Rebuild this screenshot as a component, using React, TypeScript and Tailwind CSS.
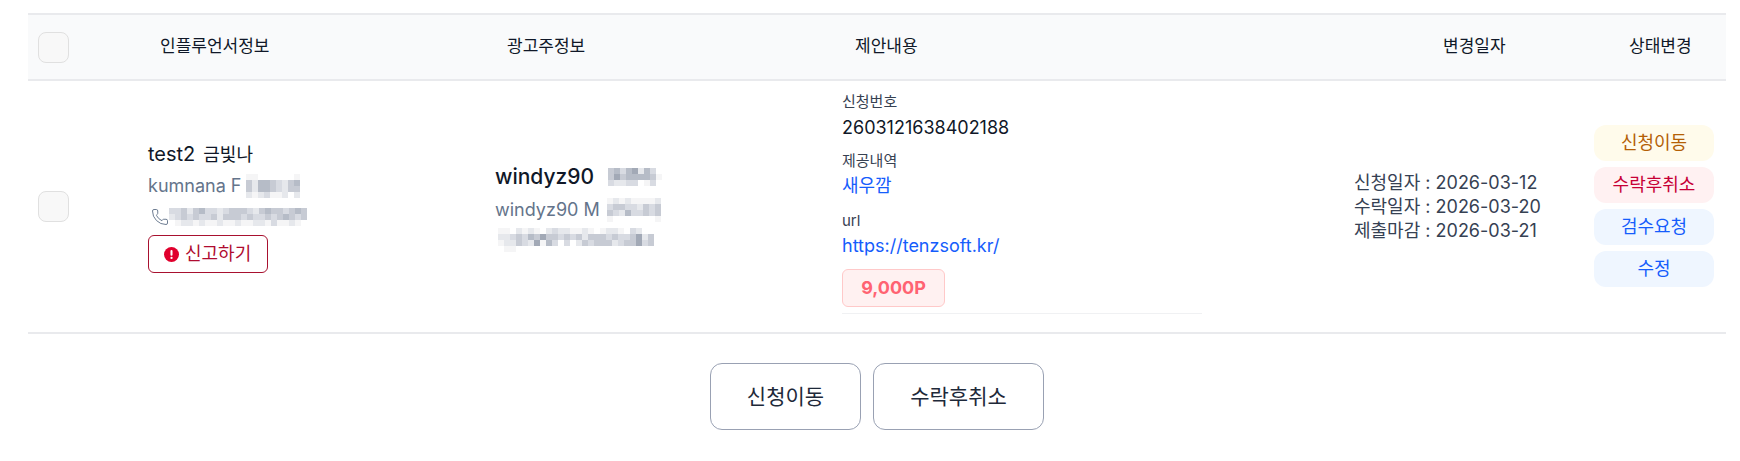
import { Phone } from "lucide-react";

const font = "font-['Inter','Noto_Sans_CJK_KR',sans-serif]";

const shades: Record<string, string> = {
  ".": "#ffffff",
  a: "#f5f5f6",
  b: "#e6e8ec",
  c: "#d8dbe2",
  d: "#c7cbd4",
  e: "#b6bcc7",
  f: "#a2a9b6",
};

// 흐림 처리된 개인정보 영역
function Mosaic({ rows }: { rows: string[] }) {
  const cell = 6;
  return (
    <svg width={rows[0].length * cell} height={rows.length * cell} className="shrink-0 block">
      {rows.map((row, y) =>
        row.split("").map((c, x) => (
          <rect key={`${x}-${y}`} x={x * cell} y={y * cell} width={cell} height={cell} fill={shades[c]} />
        ))
      )}
    </svg>
  );
}

function Field({ label, children, className = "", valueClass = "mt-[3px]" }: { label: string; children: React.ReactNode; className?: string; valueClass?: string }) {
  return (
    <div className={className}>
      <p className="text-[15px] leading-5 text-[#374151]">{label}</p>
      <div className={`${valueClass} text-lg leading-6`}>{children}</div>
    </div>
  );
}

const pills = [
  { label: "신청이동", className: "bg-[#fffbeb] text-[#b45f06]" },
  { label: "수락후취소", className: "bg-[#fff1f2] text-[#c70036]" },
  { label: "검수요청", className: "bg-[#eff6ff] text-[#155dfc]" },
  { label: "수정", className: "bg-[#eff6ff] text-[#155dfc]" },
];

export default function App() {
  return (
    <div className={`${font} bg-white h-[461px] pl-[28px] pr-[14px] pt-[13px] overflow-hidden text-[#101828]`}>
      <div className="grid grid-cols-[120px_347px_347px_512px_240px_132px] h-[68px] items-center bg-[#f9fafb] border-y-2 border-[#e9eaed] text-[17px]">
        <div className="pl-[10px]">
          <div className="w-[31px] h-[31px] rounded-lg border border-[#e0e0e0] bg-[#f8f8f8]" />
        </div>
        <div className="pl-[12px]">인플루언서정보</div>
        <div className="pl-[12px]">광고주정보</div>
        <div className="pl-[13px]">제안내용</div>
        <div className="pl-[89px]">변경일자</div>
        <div className="pl-[35px]">상태변경</div>
      </div>

      <div className="grid grid-cols-[120px_347px_347px_512px_240px_132px] h-[253px] items-center border-b-2 border-[#e9eaed]">
        <div className="pl-[10px]">
          <div className="w-[31px] h-[31px] rounded-lg border border-[#e0e0e0] bg-[#f8f8f8]" />
        </div>

        <div className="flex flex-col items-start">
          <div className="flex items-baseline gap-[8px] leading-[30px]">
            <span className="text-xl">test2</span>
            <span className="text-lg">금빛나</span>
          </div>
          <div className="flex items-center gap-[5px] mt-1 h-[26px] text-lg text-[#64748b]">
            kumnana F
            <Mosaic rows={["aa......a", "dbeedcbde", "dbeedcbdd", "babcaab.b"]} />
          </div>
          <div className="flex items-center mt-2 h-5 pl-[3px]">
            <Phone size={18} strokeWidth={1.25} className="text-[#64748b] shrink-0" />
            <Mosaic
              rows={[
                "ccdbdeccbcdddcbdeddcded",
                "bcdcdccdbdddcdccdcdedcd",
                ".abbabaabaabaabbacaaba.",
              ]}
            />
          </div>
          <button className="flex items-center gap-1.5 mt-2 w-[120px] h-[38px] pl-[15px] rounded-md border border-[#a8112f] text-lg text-[#b00c30]">
            <svg width="15" height="15" viewBox="0 0 16 16" className="shrink-0">
              <circle cx="8" cy="8" r="8" fill="#e0002d" />
              <rect x="6.9" y="3.2" width="2.2" height="6" rx="1" fill="#fff" />
              <circle cx="8" cy="11.6" r="1.2" fill="#fff" />
            </svg>
            신고하기
          </button>
        </div>

        <div className="flex flex-col items-start">
          <div className="flex items-center gap-[14px] h-[30px] text-[21px] font-medium">
            windyz90
            <Mosaic rows={["decefbec.", "dfdeeeeda", "cbbcc.ac."]} />
          </div>
          <div className="flex items-center gap-[7px] mt-[5px] h-[26px] text-lg text-[#64748b]">
            windyz90 M
            <Mosaic rows={["ababaaaab", "cddccbdcd", "dcbeccdcd", "a.......a"]} />
          </div>
          <div className="mt-[5px] ml-[3px]">
            <Mosaic
              rows={[
                "aa.baba.bcbbaaba.abba.cb..",
                "bbcdcedfddcdcdbdddcdccdfbd",
                "abbdcbfaec.c.bdcdddbcddfcd",
                ".aa.......................",
              ]}
            />
          </div>
        </div>

        <div className="self-start pt-[11px] pr-[152px]">
          <Field label="신청번호" valueClass="mt-1">2603121638402188</Field>
          <Field label="제공내역" className="mt-[11px]">
            <a className="text-[#155dfc]">새우깜</a>
          </Field>
          <Field label="url" className="mt-[13px]">
            <a className="text-[#155dfc]">https://tenzsoft.kr/</a>
          </Field>
          <div className="mt-[11px] pb-[6px] border-b border-[#f0f1f3]">
            <div className="flex items-center justify-center w-[103px] h-[38px] rounded-md border border-[#ffc9c9] bg-[#fff1f1] text-lg font-bold text-[#ff6372]">
              9,000P
            </div>
          </div>
        </div>

        <div className="text-lg leading-6 text-[#364153]">
          <p>신청일자 : 2026-03-12</p>
          <p>수락일자 : 2026-03-20</p>
          <p>제출마감 : 2026-03-21</p>
        </div>

        <div className="flex flex-col gap-1.5 w-[120px] -mt-px">
          {pills.map((pill) => (
            <button key={pill.label} className={`h-9 rounded-xl text-lg ${pill.className}`}>
              {pill.label}
            </button>
          ))}
        </div>
      </div>

      <div className="flex justify-center gap-3 mt-[29px]">
        <button className="w-[151px] h-[67px] rounded-xl border border-[#99a1b3] text-[21px] text-[#1e2939]">신청이동</button>
        <button className="w-[171px] h-[67px] rounded-xl border border-[#99a1b3] text-[21px] text-[#1e2939]">수락후취소</button>
      </div>
    </div>
  );
}
